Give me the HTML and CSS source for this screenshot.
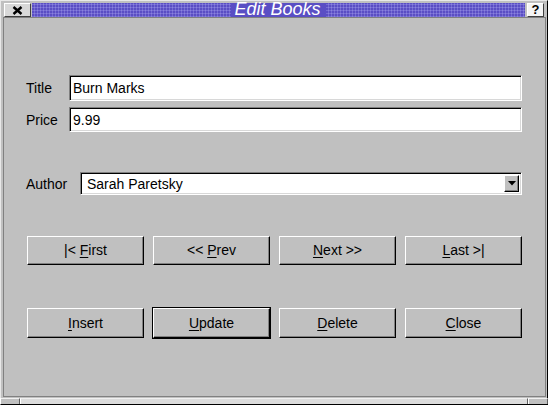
FILE: index.html
```html
<!DOCTYPE html>
<html>
<head>
<meta charset="utf-8">
<link rel="stylesheet" href="styles.css">
</head>
<body>
<div class="window">
  <div class="titlebar">
    <div class="tbtn close-btn">
      <svg width="11" height="9" viewBox="0 0 11 9"><path d="M1.5 1 L9.5 8 M9.5 1 L1.5 8" stroke="#000" stroke-width="2.4" fill="none"/></svg>
    </div>
    <div class="caption"><span class="caption-text"><span class="caption-inner">Edit Books</span></span></div>
    <div class="tbtn help-btn">?</div>
  </div>
  <div class="client">
    <div class="row row-title">
      <label class="lbl lbl-short">Title</label>
      <div class="field">Burn Marks</div>
    </div>
    <div class="row row-price">
      <label class="lbl lbl-short">Price</label>
      <div class="field">9.99</div>
    </div>
    <div class="row row-author">
      <label class="lbl lbl-long">Author</label>
      <div class="field select">
        <span class="select-text">Sarah Paretsky</span>
        <span class="drop">
          <svg width="8" height="5" viewBox="0 0 8 5"><path d="M0 0 H8 L4 4.5 Z" fill="#000"/></svg>
        </span>
      </div>
    </div>
    <div class="buttons nav">
      <div class="btn"><span>|&lt; <u>F</u>irst</span></div>
      <div class="btn"><span>&lt;&lt; <u>P</u>rev</span></div>
      <div class="btn"><span><u>N</u>ext &gt;&gt;</span></div>
      <div class="btn"><span><u>L</u>ast &gt;|</span></div>
    </div>
    <div class="buttons actions">
      <div class="btn"><span><u>I</u>nsert</span></div>
      <div class="btn default"><span><u>U</u>pdate</span></div>
      <div class="btn"><span><u>D</u>elete</span></div>
      <div class="btn"><span><u>C</u>lose</span></div>
    </div>
  </div>
  <div class="statusbar">
    <div class="seg seg-l"></div>
    <div class="seg seg-m"></div>
    <div class="seg seg-r"></div>
  </div>
</div>
</body>
</html>
```

FILE: styles.css
```css
html, body {
  margin: 0;
  padding: 0;
  background: #c0c0c0;
}
body {
  font-family: "Liberation Sans", Arial, sans-serif;
  font-size: 14px;
  color: #000;
}
.window {
  width: 548px;
  height: 405px;
  box-sizing: border-box;
  background: #c0c0c0;
  border-top: 1px solid #e8e8e8;
  border-left: 1px solid #e8e8e8;
  border-right: 1px solid #000;
  border-bottom: 1px solid #000;
  display: flex;
  flex-direction: column;
}
.titlebar {
  height: 16px;
  box-sizing: border-box;
  padding: 2px 3px 0 3px;
  display: flex;
  align-items: flex-start;
}
.tbtn {
  height: 14px;
  box-sizing: border-box;
  display: flex;
  align-items: center;
  justify-content: center;
}
.close-btn {
  width: 27px;
  background: #d8d8d8;
  border: 1px solid;
  border-color: #fff #404040 #404040 #fff;
}
.caption {
  flex: 1;
  height: 14px;
  margin-left: 1px;
  margin-right: 2px;
  background-color: #5a4ec4;
  background-image: radial-gradient(circle, #8a82de 45%, transparent 50%);
  background-size: 3px 3px;
  background-position: 1px 0;
  display: flex;
  justify-content: center;
  align-items: flex-start;
}
.caption-text {
  background: #5a4ec4;
  height: 14px;
  padding: 0 5px 0 3px;
  white-space: nowrap;
}
.caption-inner {
  display: block;
  color: #fff;
  font-style: italic;
  font-size: 18px;
  line-height: 14px;
  margin-top: -1px;
}
.help-btn {
  width: 17px;
  background: #f4f4f4;
  border: 1px solid;
  border-color: #fff #404040 #404040 #fff;
  font-weight: bold;
  font-size: 13px;
  line-height: 12px;
}
.client {
  flex: 1;
  margin: 0 1px 0 2px;
  border: 1px solid #808080;
  padding: 57px 23px 0 22px;
  display: flex;
  flex-direction: column;
}
.row {
  display: flex;
  align-items: center;
}
.row-title { height: 26px; }
.row-price { height: 25px; margin-top: 6px; }
.row-author { height: 23px; margin-top: 40px; }
.lbl {
  flex: none;
}
.lbl-short { width: 43px; }
.lbl-long { width: 54px; }
.field {
  flex: 1;
  height: 100%;
  box-sizing: border-box;
  background: #fff;
  border: 1px solid;
  border-color: #808080 #fff #fff #808080;
  box-shadow: inset 1px 1px 0 #000, inset -1px -1px 0 #d8d8d8;
  padding: 0 3px;
  display: flex;
  align-items: center;
  white-space: nowrap;
}
.select {
  padding: 0 2px 0 6px;
}
.select-text {
  flex: 1;
}
.drop {
  width: 15px;
  height: 17px;
  box-sizing: border-box;
  background: #c0c0c0;
  border: 1px solid;
  border-color: #fff #000 #000 #fff;
  box-shadow: inset -1px -1px 0 #808080;
  display: flex;
  align-items: center;
  justify-content: center;
}
.buttons {
  display: grid;
  grid-template-columns: repeat(4, 1fr);
  column-gap: 9px;
  margin-left: 1px;
}
.nav { height: 29px; margin-top: 41px; }
.actions { height: 30px; margin-top: 43px; }
.btn {
  box-sizing: border-box;
  border: 1px solid;
  border-color: #fff #000 #000 #fff;
  box-shadow: inset -1px -1px 0 #808080;
  display: flex;
  align-items: center;
  justify-content: center;
  white-space: nowrap;
  padding-bottom: 1px;
}
.btn u {
  text-decoration-thickness: 1px;
  text-underline-offset: 2px;
}
.btn.default {
  outline: 1px solid #000;
}
.statusbar {
  height: 6px;
  display: flex;
  margin-top: 1px;
}
.seg {
  box-sizing: border-box;
  border-left: 1px solid #fff;
  border-right: 1px solid #606060;
  border-top: 1px solid #f0f0f0;
}
.seg-l { width: 20px; background: #c0c0c0; margin-left: -1px; }
.seg-m { flex: 1; background: #dcdcdc; }
.seg-r { width: 20px; background: #c0c0c0; margin-right: -1px; }
```
